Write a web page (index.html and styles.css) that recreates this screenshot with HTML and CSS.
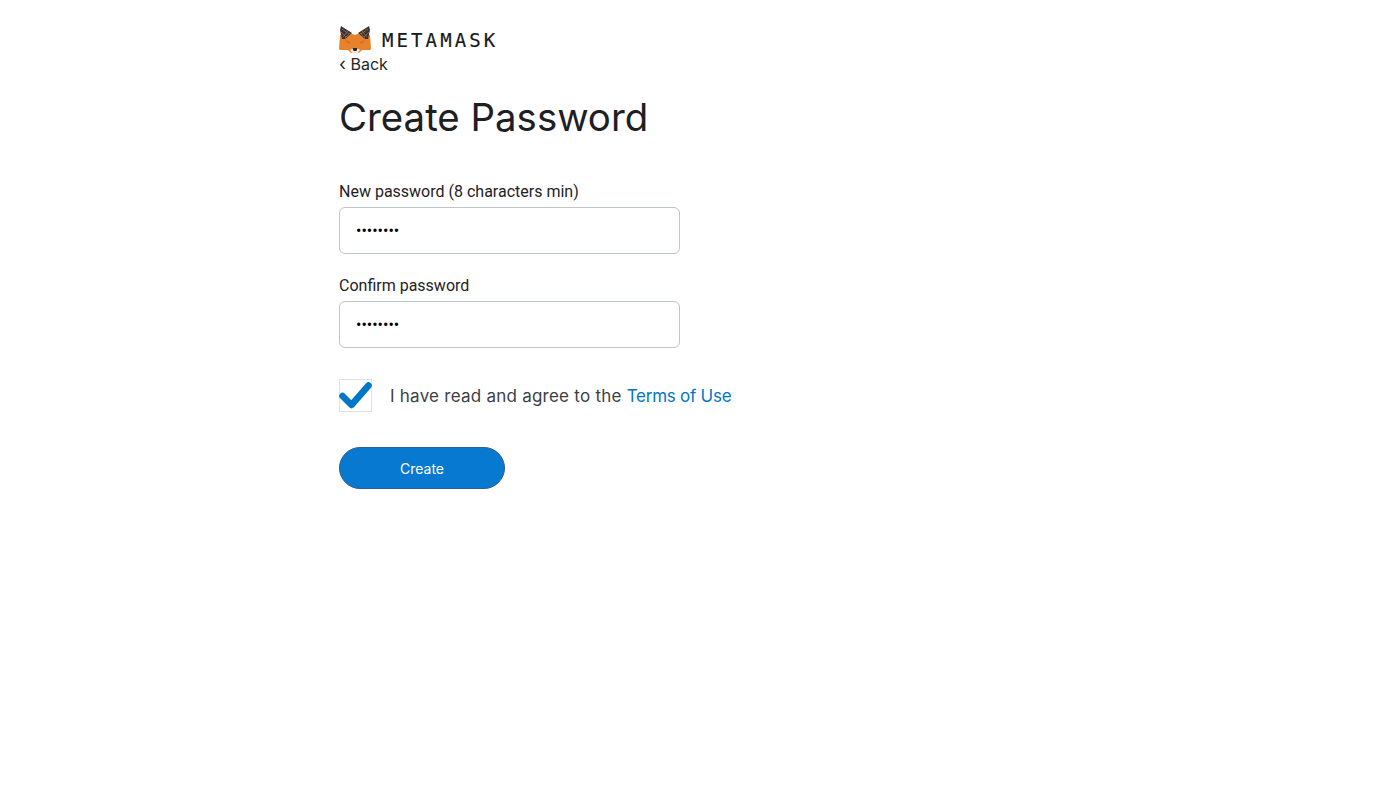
FILE: index.html
```html
<!DOCTYPE html>
<html lang="en">
<head>
<meta charset="utf-8">
<title>Create Password</title>
<link rel="stylesheet" href="styles.css">
</head>
<body>
<main class="page">
  <header class="brand">
    <svg class="fox" viewBox="0 0 32 29" width="32" height="29" aria-hidden="true">
      <path fill="#e8812c" d="M1 10 L11 8 L16 10 L21 8 L31 10 L32 24 L31 25 L23 25 L20 28 L12 28 L9 25 L1 25 L0 24 Z"/>
      <path fill="#3b3532" d="M2 1 L13 8 L6 14 L3 14 L1 5 Z"/>
      <path fill="#3b3532" d="M30 1 L19 8 L26 14 L29 14 L31 5 Z"/>
      <path fill="none" stroke="#a9805c" stroke-width=".6" d="M3 4 L10 9 M2 7 L7 12 M4 12 L9 6 M6 13 L11 8 M29 4 L22 9 M30 7 L25 12 M28 12 L23 6 M26 13 L21 8"/>
      <path fill="#f0e6dc" d="M11 25 L14 23 L18 23 L21 25 L19 28 L13 28 Z"/>
      <path fill="#2b2725" d="M13.500 23 L18.500 23 L17.500 26 L14.500 26 Z"/>
      <path fill="#cf6c20" d="M6 15 L11 17 L10 19 Z M26 15 L21 17 L22 19 Z"/>
    </svg>
    <span class="wordmark">METAMASK</span>
  </header>
  <a class="back" href="#"><span class="chevron">&lsaquo;</span> Back</a>
  <h1 class="title">Create Password</h1>
  <form class="form">
    <label class="field">
      <span class="label">New password (8 characters min)</span>
      <input class="input" type="password" value="password">
    </label>
    <label class="field">
      <span class="label">Confirm password</span>
      <input class="input" type="password" value="password">
    </label>
    <div class="terms">
      <span class="box">
        <svg viewBox="0 0 33 33" width="33" height="33" aria-hidden="true">
          <path d="M3.500 17 L12.500 26 L29.500 6.500" fill="none" stroke="#0376c9" stroke-width="6.500" stroke-linecap="round" stroke-linejoin="round"/>
        </svg>
      </span>
      <span class="terms-text">I have read and agree to the <a class="link" href="#">Terms of Use</a></span>
    </div>
    <button class="create" type="button">Create</button>
  </form>
</main>
</body>
</html>
```
FILE: styles.css
```css
* { box-sizing: border-box; }
html, body { margin: 0; height: 100%; background: #fff; }
body { font-family: "Inter", "Liberation Sans", sans-serif; color: #24272a; overflow: hidden; }
.page { width: 400px; margin-left: 339px; padding-top: 25px; }
.brand { display: flex; align-items: center; height: 29px; }
.fox { display: block; flex: none; }
.wordmark { margin-left: 11px; font-family: "DejaVu Sans Mono", "Liberation Mono", monospace; font-size: 19px; letter-spacing: 3.1px; color: #161b22; -webkit-text-stroke: .2px #161b22; }
.back { display: block; height: 20px; font-size: 16px; line-height: 20px; color: #24272a; text-decoration: none; }
.chevron { font-size: 18px; line-height: 16px; }
.title { margin: 19px 0 0; font-size: 38.4px; line-height: 48px; font-weight: 400; color: #1d2023; }
.form { margin-top: 41px; display: flex; flex-direction: column; align-items: flex-start; }
.field { display: flex; flex-direction: column; width: 341px; margin-bottom: 22px; }
.label { font-family: Roboto, sans-serif; font-size: 16px; line-height: 19px; color: #1f2226; margin-bottom: 6px; }
.input { width: 100%; height: 47px; padding: 0 16px; border: 1px solid #bfc5ca; border-radius: 6px; background: #fff; font-family: Roboto, sans-serif; font-size: 16px; color: #000; outline: none; }
.terms { display: flex; align-items: center; margin-top: 9px; }
.box { width: 33px; height: 33px; border: 1px solid #dfe3e6; display: block; flex: none; }
.box svg { display: block; margin: -1px; }
.terms-text { margin-left: 18px; font-size: 17px; letter-spacing: .24px; color: #3c4146; white-space: nowrap; }
.link { color: #0376c9; text-decoration: none; letter-spacing: -.25px; }
.create { margin-top: 35px; width: 166px; height: 42px; border: 1px solid #2f5f8a; border-radius: 21px; background: #0779d0; color: #fff; font-family: inherit; font-size: 14px; }
```
